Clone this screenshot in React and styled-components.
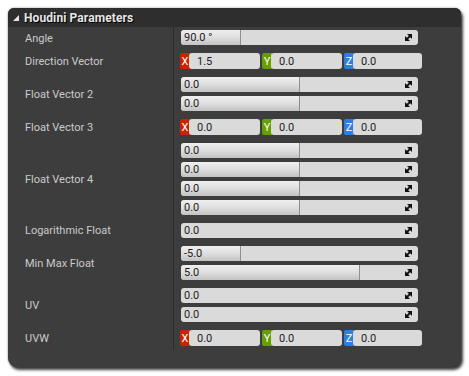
import React from "react";
import styled, { createGlobalStyle } from "styled-components";

const Global = createGlobalStyle`
  html, body { margin: 0; padding: 0; background: #ffffff; }
  body { font-family: Roboto, "Liberation Sans", Arial, sans-serif; }
`;

const Page = styled.div`
  padding: 8px;
  width: 469px;
  height: 376px;
  box-sizing: border-box;
`;

const Panel = styled.div`
  width: 453px;
  height: 359px;
  background: #3d3d3d;
  border-radius: 6px 6px 9px 9px;
  box-shadow: 2px 3px 3px rgba(0, 0, 0, 0.75), 0 0 2px rgba(0, 0, 0, 0.5);
  overflow: hidden;
  display: flex;
  flex-direction: column;
`;

const Header = styled.div`
  height: 19px;
  background: #2e2e2e;
  display: flex;
  align-items: center;
  gap: 5px;
  padding-left: 5px;
  color: #e6e6e6;
  font-weight: bold;
  font-size: 12px;
  text-shadow: 1px 1px 0 #000;
  letter-spacing: 0.1px;
`;

const Body = styled.div`
  display: flex;
  flex-direction: column;
`;

const Row = styled.div`
  display: grid;
  grid-template-columns: 165px 1fr;
`;

const Label = styled.div`
  display: flex;
  align-items: center;
  padding-left: 17px;
  font-size: 11px;
  color: #cbcbcb;
`;

const Value = styled.div`
  border-left: 1px solid #2b2b2b;
  padding: ${(p) => (p.$first ? "3px" : "4px")} 0 4px 6px;
  display: flex;
  flex-direction: column;
  gap: 4px;
`;

const Slider = styled.div`
  position: relative;
  width: 237px;
  margin-left: 1px;
  height: 15px;
  border-radius: 3px;
  background: #dadada;
  overflow: hidden;
  font-size: 11px;
  color: #1c1c1c;
  display: flex;
  align-items: center;
`;

const Fill = styled.div`
  position: absolute;
  left: 0;
  top: 0;
  bottom: 0;
  background: linear-gradient(#efefef, #dedede 50%, #c2c2c2);
  border-right: 1px solid #8f8f8f;
  border-radius: 3px 0 0 3px;
`;

const SliderText = styled.span`
  position: relative;
  padding-left: 3px;
`;

const ArrowIcon = styled.svg`
  position: absolute;
  right: 6px;
  top: 4px;
`;

const Vector = styled.div`
  display: grid;
  grid-template-columns: 80px 80px 78px;
  gap: 2px;
  height: 16px;
`;

const Comp = styled.div`
  display: flex;
  height: 16px;
`;

const Axis = styled.div`
  width: 10px;
  background: ${(p) => p.$c};
  color: #ffffff;
  font-size: 11px;
  display: flex;
  align-items: center;
  justify-content: center;
  border-radius: 2px 0 0 2px;
`;

const Field = styled.div`
  flex: 1;
  background: #dadada;
  border-radius: 3px;
  margin-left: -1px;
  font-size: 11px;
  color: #1c1c1c;
  display: flex;
  align-items: center;
  padding-left: 8px;
`;

const Triangle = () => (
  <svg width="6" height="6" viewBox="0 0 6 6">
    <polygon points="6,0 6,6 0,6" fill="#e6e6e6" />
  </svg>
);

const Arrow = () => (
  <ArrowIcon width="7" height="7" viewBox="0 0 7 7">
    <polygon points="2,0 7,0 7,5" fill="#111" />
    <polygon points="0,2 0,7 5,7" fill="#111" />
    <line x1="1.5" y1="5.5" x2="5.5" y2="1.5" stroke="#111" strokeWidth="1.8" />
  </ArrowIcon>
);

const SliderBox = ({ text, fill }) => (
  <Slider>
    {fill > 0 && <Fill style={{ width: fill }} />}
    <SliderText>{text}</SliderText>
    <Arrow />
  </Slider>
);

const AXES = [
  ["X", "#cc2200"],
  ["Y", "#66a000"],
  ["Z", "#2d7fe6"],
];

const VectorBox = ({ values }) => (
  <Vector>
    {AXES.map(([a, c], i) => (
      <Comp key={a}>
        <Axis $c={c}>{a}</Axis>
        <Field>{values[i]}</Field>
      </Comp>
    ))}
  </Vector>
);

const rows = [
  { label: "Angle", items: [{ s: "90.0 °", f: 59 }] },
  { label: "Direction Vector", vec: ["1.5", "0.0", "0.0"] },
  { label: "Float Vector 2", items: [{ s: "0.0", f: 118 }, { s: "0.0", f: 118 }] },
  { label: "Float Vector 3", vec: ["0.0", "0.0", "0.0"] },
  {
    label: "Float Vector 4",
    items: [
      { s: "0.0", f: 118 },
      { s: "0.0", f: 118 },
      { s: "0.0", f: 118 },
      { s: "0.0", f: 118 },
    ],
  },
  { label: "Logarithmic Float", items: [{ s: "0.0", f: 0 }] },
  { label: "Min Max Float", items: [{ s: "-5.0", f: 59 }, { s: "5.0", f: 178 }] },
  { label: "UV", items: [{ s: "0.0", f: 0 }, { s: "0.0", f: 0 }] },
  { label: "UVW", vec: ["0.0", "0.0", "0.0"] },
];

export default function App() {
  return (
    <>
      <Global />
      <Page>
        <Panel>
          <Header>
            <Triangle />
            <span>Houdini Parameters</span>
          </Header>
          <Body>
            {rows.map((r, idx) => (
              <Row key={r.label}>
                <Label>{r.label}</Label>
                <Value $first={idx === 0}>
                  {r.vec ? (
                    <VectorBox values={r.vec} />
                  ) : (
                    r.items.map((it, i) => <SliderBox key={i} text={it.s} fill={it.f} />)
                  )}
                </Value>
              </Row>
            ))}
          </Body>
        </Panel>
      </Page>
    </>
  );
}
